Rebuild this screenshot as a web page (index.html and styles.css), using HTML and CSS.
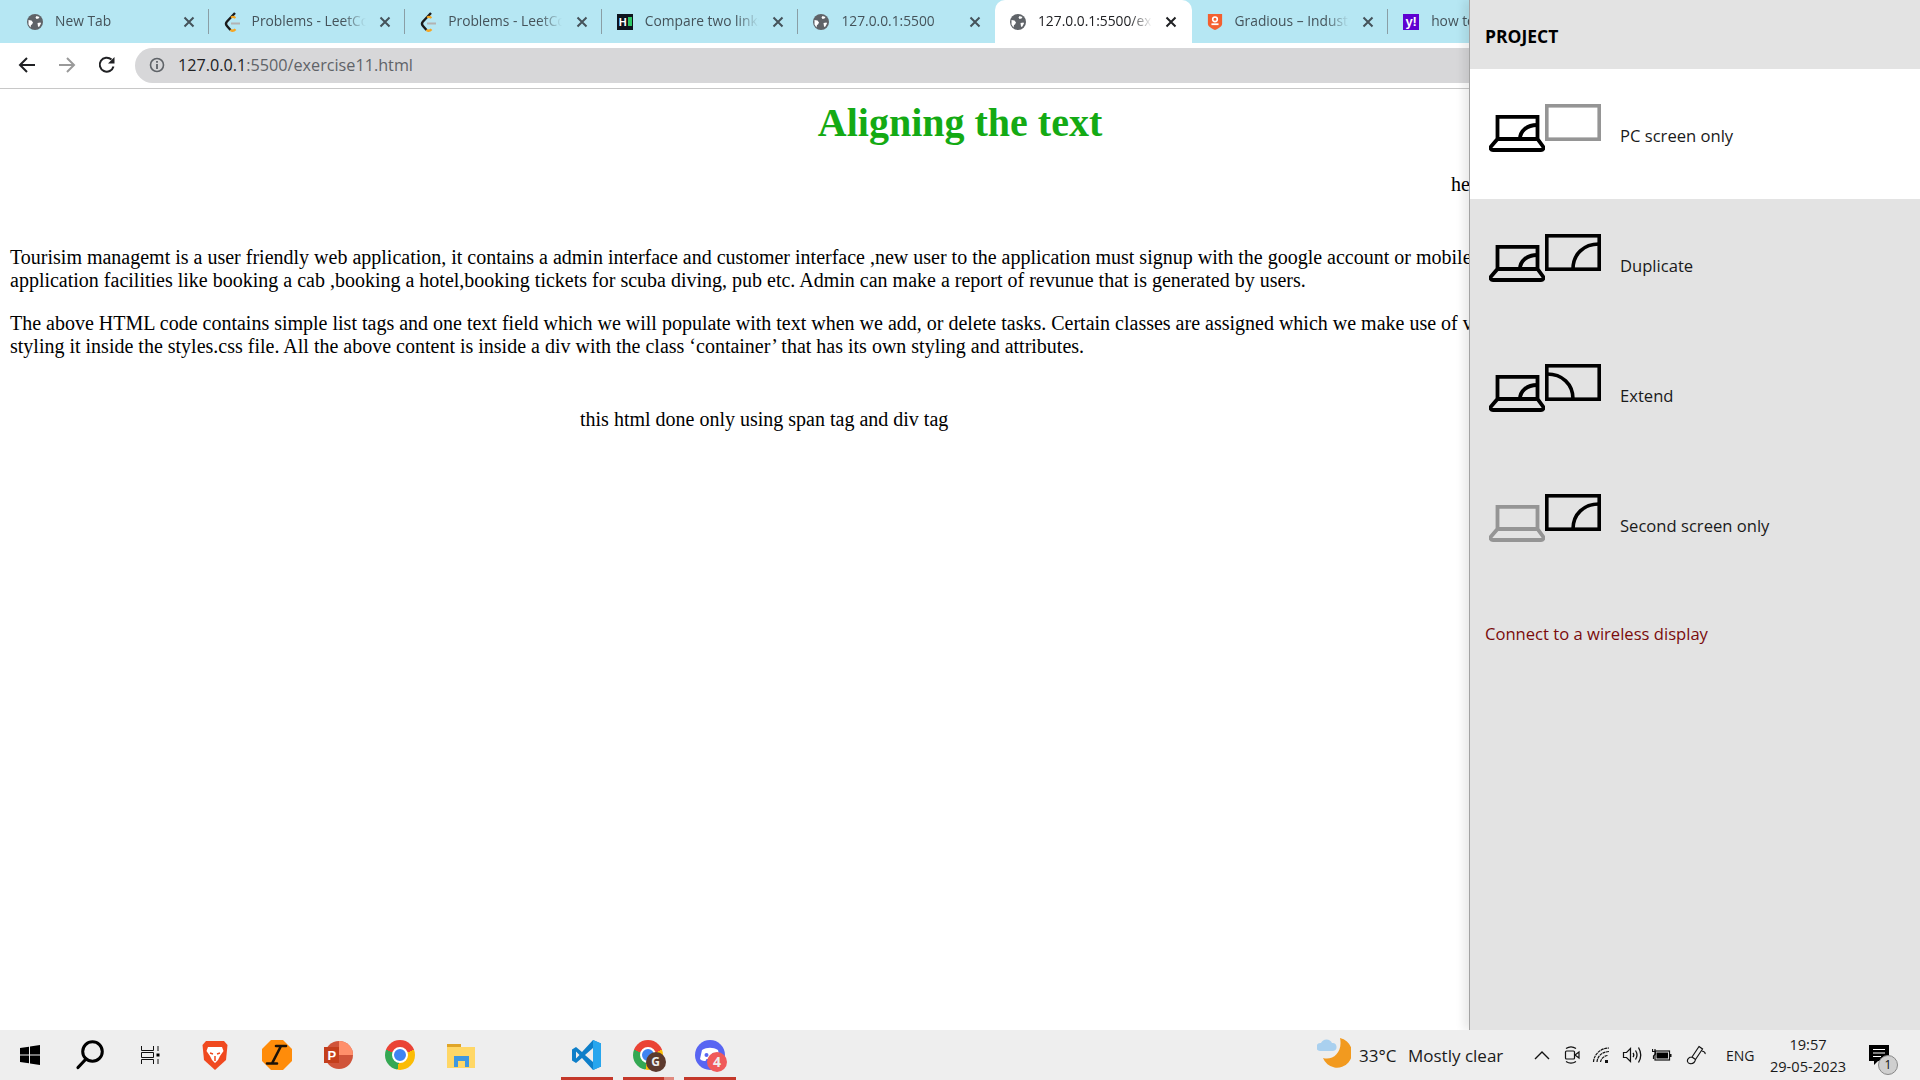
FILE: index.html
```html
<!DOCTYPE html>
<html lang="en">
<head>
    <meta charset="UTF-8">
    <title>127.0.0.1:5500/exercise11.html</title>
    <link rel="stylesheet" href="styles.css">
</head>
<body>
<svg class="defs" width="0" height="0">
    <symbol id="globe" viewBox="0 0 16 16">
        <circle cx="8" cy="8" r="8" fill="#5f6368"/>
        <path d="M1.500 6l3 .5 1.500 2-1 2-1 .5-.5 2.500-2-3zM9.500 2l3 1-1 1.500-2 .5-1-1.500zM10.500 9l3-.5.5 1-2 3.500-1-.5z" fill="#fff"/>
    </symbol>
    <symbol id="close" viewBox="0 0 12 12">
        <path d="M1.500 1.500l9 9M10.500 1.500l-9 9" stroke="currentColor" stroke-width="2" fill="none"/>
    </symbol>
    <symbol id="leetcode" viewBox="0 0 16 20">
        <path d="M11 1L3 9.500c-1.300 1.400-1.300 3 0 4.500l3.500 4" stroke="#1a1a1a" stroke-width="2.400" fill="none"/>
        <path d="M6.500 18c1.500 1 3.500 .8 5-.8" stroke="#f5a623" stroke-width="2.400" fill="none"/>
        <path d="M7 11.500h9" stroke="#b3b3b3" stroke-width="2"/>
        <path d="M7 5.500c1.500-1 3-.8 4.500 .5" stroke="#f5a623" stroke-width="2" fill="none"/>
    </symbol>
    <symbol id="laptop" viewBox="0 0 56 37">
        <path d="M8.500 24V1.800h40V24M8.500 24h40l5.500 7.500c1 2 0 3.500-2 3.500H4c-2 0-3-1.500-2-3.500z" fill="none" stroke="currentColor" stroke-width="3.800"/>
    </symbol>
    <symbol id="laptop-arc" viewBox="0 0 56 37">
        <path d="M31 24c0-8 7-14 17-14" fill="none" stroke="currentColor" stroke-width="3.800"/>
    </symbol>
</svg>

<div class="tabstrip">
    <div class="tab">
        <svg class="favicon"><use href="#globe"/></svg>
        <span class="tab-title">New Tab</span>
        <svg class="tab-close"><use href="#close"/></svg>
    </div>
    <div class="tab">
        <svg class="favicon favicon-tall"><use href="#leetcode"/></svg>
        <span class="tab-title">Problems - LeetCode</span>
        <svg class="tab-close"><use href="#close"/></svg>
    </div>
    <div class="tab">
        <svg class="favicon favicon-tall"><use href="#leetcode"/></svg>
        <span class="tab-title">Problems - LeetCode</span>
        <svg class="tab-close"><use href="#close"/></svg>
    </div>
    <div class="tab">
        <span class="favicon hackerrank">H<i></i></span>
        <span class="tab-title">Compare two links</span>
        <svg class="tab-close"><use href="#close"/></svg>
    </div>
    <div class="tab no-sep">
        <svg class="favicon"><use href="#globe"/></svg>
        <span class="tab-title">127.0.0.1:5500</span>
        <svg class="tab-close"><use href="#close"/></svg>
    </div>
    <div class="tab tab-active no-sep">
        <svg class="favicon"><use href="#globe"/></svg>
        <span class="tab-title">127.0.0.1:5500/exercise11</span>
        <svg class="tab-close"><use href="#close"/></svg>
    </div>
    <div class="tab">
        <svg class="favicon" viewBox="0 0 16 18">
            <path d="M0 0h16v11c0 3-4 5.500-8 7-4-1.500-8-4-8-7z" fill="#f4602f"/>
            <circle cx="8" cy="6" r="2.600" fill="none" stroke="#fff" stroke-width="1.800"/>
            <path d="M4 11.500h8" stroke="#fff" stroke-width="2"/>
        </svg>
        <span class="tab-title">Gradious – Industry</span>
        <svg class="tab-close"><use href="#close"/></svg>
    </div>
    <div class="tab">
        <span class="favicon yahoo">y!</span>
        <span class="tab-title">how to</span>
    </div>
</div>

<div class="toolbar">
    <svg class="nav-icon" viewBox="0 0 20 20"><path d="M18 10H3M10 3l-7 7 7 7" fill="none" stroke="#202124" stroke-width="2"/></svg>
    <svg class="nav-icon" viewBox="0 0 20 20"><path d="M2 10h15M10 3l7 7-7 7" fill="none" stroke="#9a9a9a" stroke-width="2"/></svg>
    <svg class="nav-icon" viewBox="0 0 20 20"><path d="M16.500 11.500A7 7 0 1 1 14.500 4.500" fill="none" stroke="#202124" stroke-width="2"/><path d="M17.500 2v6.500H11z" fill="#202124"/></svg>
    <div class="omnibox">
        <svg class="info-icon" viewBox="0 0 16 16">
            <circle cx="8" cy="8" r="6.500" fill="none" stroke="#5f6368" stroke-width="1.600"/>
            <path d="M8 7v5M8 4v1.800" stroke="#5f6368" stroke-width="1.800"/>
        </svg>
        <span class="url"><b>127.0.0.1</b>:5500/exercise11.html</span>
    </div>
</div>

<main class="page">
    <h1 class="page-title">Aligning the text</h1>
    <div class="right-text">he</div>
    <p class="para">Tourisim managemt is a user friendly web application, it contains a admin interface and customer interface ,new user to the application must signup with the google account or mobile<br>application facilities like booking a cab ,booking a hotel,booking tickets for scuba diving, pub etc. Admin can make a report of revunue that is generated by users.</p>
    <p class="para">The above HTML code contains simple list tags and one text field which we will populate with text when we add, or delete tasks. Certain classes are assigned which we make use of v<br>styling it inside the styles.css file. All the above content is inside a div with the class ‘container’ that has its own styling and attributes.</p>
    <div class="span-text">this html done only using span tag and div tag</div>
</main>

<aside class="project-panel">
    <div class="project-head">PROJECT</div>

    <div class="project-item selected">
        <div class="screens">
            <svg class="laptop"><use href="#laptop"/><use href="#laptop-arc"/></svg>
            <svg class="monitor dim" viewBox="0 0 56 37"><rect x="1.800" y="1.800" width="52.400" height="33.400" fill="none" stroke="currentColor" stroke-width="3.600"/></svg>
        </div>
        <span>PC screen only</span>
    </div>
    <div class="project-item">
        <div class="screens">
            <svg class="laptop"><use href="#laptop"/><use href="#laptop-arc"/></svg>
            <svg class="monitor" viewBox="0 0 56 37"><rect x="1.800" y="1.800" width="52.400" height="33.400" fill="none" stroke="currentColor" stroke-width="3.600"/><path d="M28 35c0-15 11-25 26-25" fill="none" stroke="currentColor" stroke-width="3.600"/></svg>
        </div>
        <span>Duplicate</span>
    </div>
    <div class="project-item">
        <div class="screens">
            <svg class="laptop"><use href="#laptop"/><use href="#laptop-arc"/></svg>
            <svg class="monitor" viewBox="0 0 56 37"><rect x="1.800" y="1.800" width="52.400" height="33.400" fill="none" stroke="currentColor" stroke-width="3.600"/><path d="M2 10c15 0 26 10 26 25" fill="none" stroke="currentColor" stroke-width="3.600"/></svg>
        </div>
        <span>Extend</span>
    </div>
    <div class="project-item">
        <div class="screens">
            <svg class="laptop dim"><use href="#laptop"/></svg>
            <svg class="monitor" viewBox="0 0 56 37"><rect x="1.800" y="1.800" width="52.400" height="33.400" fill="none" stroke="currentColor" stroke-width="3.600"/><path d="M28 35c0-15 11-25 26-25" fill="none" stroke="currentColor" stroke-width="3.600"/></svg>
        </div>
        <span>Second screen only</span>
    </div>

    <div class="wireless-link">Connect to a wireless display</div>
</aside>

<footer class="taskbar">
    <div class="task-slot">
        <svg class="ic-win" viewBox="0 0 20 20"><path d="M0 3l9-1.300V9.500H0zM10 1.500L20 0v9.500H10zM0 10.500h9v7.800L0 17zM10 10.500h10V20l-10-1.500z"/></svg>
    </div>
    <div class="task-slot">
        <svg class="ic-search" viewBox="0 0 30 30"><circle cx="17.500" cy="11.500" r="9.800" fill="none" stroke="#000" stroke-width="3"/><path d="M11 19L3 27.500" stroke="#000" stroke-width="3.200" stroke-linecap="round"/></svg>
    </div>
    <div class="task-slot">
        <svg class="ic-view" viewBox="0 0 20 20"><path d="M1.500 1v4.500h12V1M1.500 19v-4.500h12V19M1.500 7.500h12v5h-12zM18 1v5M18 14v5" fill="none" stroke="#111" stroke-width="1"/><rect x="16.500" y="8.500" width="3" height="3"/></svg>
    </div>
    <div class="task-slot">
        <svg class="ic-app" viewBox="0 0 30 30">
            <path d="M6 1h18l3.500 4-1.500 15L15 30 4 20 2.500 5z" fill="#f0491f"/>
            <path d="M8 7h14l1.500 4-3.500 5-2 4-3 3-3-3-2-4-3.500-5z" fill="#fff"/>
            <path d="M10 13l3 1M20 13l-3 1M15 16v5" stroke="#f0491f" stroke-width="1.500"/>
        </svg>
    </div>
    <div class="task-slot">
        <svg class="ic-app" viewBox="0 0 30 30">
            <path d="M9 0h12l9 9v12l-9 9H9l-9-9V9z" fill="#ff8c0a"/>
            <path d="M14 6h10M5 23.500h10M19 6l-9 17.500" fill="none" stroke="#1c1208" stroke-width="2.600" stroke-linecap="round"/>
        </svg>
    </div>
    <div class="task-slot">
        <svg class="ic-app" viewBox="0 0 30 30">
            <circle cx="16" cy="15" r="14" fill="#d0543a"/>
            <path d="M16 1a14 14 0 0 1 14 14H16z" fill="#ff8f6b"/>
            <rect x="1" y="7" width="15" height="16" fill="#c43e1c"/>
            <text x="4.500" y="19.500" class="ppt-letter">P</text>
        </svg>
    </div>
    <div class="task-slot"><span class="chrome"></span></div>
    <div class="task-slot">
        <svg class="ic-app" viewBox="0 0 30 30">
            <path d="M1 4h14v5H1z" fill="#e0a528"/>
            <path d="M1 7h28v21H1z" fill="#ffd766"/>
            <path d="M8 27V16h15v11h-4v-6h-7v6z" fill="#3f97e0"/>
        </svg>
    </div>
    <div class="task-slot task-gap"></div>
    <div class="task-slot running">
        <svg class="ic-app" viewBox="0 0 30 30">
            <path d="M21 0L10 12 4 7 0 9.500v11L4 23l6-5 11 12 8-3.500V3.500z" fill="#0e7fc9"/>
            <path d="M21 0l8 3.500v23L21 30z" fill="#27a6ee"/>
            <path d="M21 8l-8 7 8 7z" fill="#eeeeee"/>
            <path d="M4 11.500v7l3.500-3.500z" fill="#eeeeee"/>
        </svg>
    </div>
    <div class="task-slot running running-part">
        <span class="chrome"></span>
        <span class="overlay-badge badge-g">G</span>
    </div>
    <div class="task-slot running">
        <svg class="ic-app" viewBox="0 0 30 30">
            <circle cx="15" cy="15" r="15" fill="#5865f2"/>
            <path d="M7 10c5-3 11-3 16 0l2 9c-2 2-4 2-5.500 2l-1-2H11.500l-1 2C9 21 7 21 5 19z" fill="#fff"/>
            <circle cx="11.500" cy="15" r="2" fill="#5865f2"/>
            <circle cx="18.500" cy="15" r="2" fill="#5865f2"/>
        </svg>
        <span class="overlay-badge badge-4">4</span>
    </div>

    <div class="tray">
        <svg class="weather" viewBox="0 0 34 30">
            <path d="M19 0a15 15 0 1 1-17 20c10 3 20-6 17-20z" fill="#f29a1f" transform="translate(4 0)"/>
            <path d="M3 13a4 4 0 0 1 1-8 6 6 0 0 1 11 0 4 4 0 0 1 1 8z" fill="#a9d0ef"/>
        </svg>
        <span class="weather-text weather-temp">33°C</span>
        <span class="weather-text weather-desc">Mostly clear</span>
        <div class="tray-icons">
            <svg class="tray-ic" viewBox="0 0 20 20"><path d="M3 14l7-7 7 7" fill="none" stroke="#111" stroke-width="1.400"/></svg>
            <svg class="tray-ic" viewBox="0 0 20 20"><path d="M4 3.500c3-2 7-2 10 0M4 16.500c3 2 7 2 10 0" fill="none" stroke="#111" stroke-width="1.200"/><rect x="3.500" y="6" width="9" height="8" rx="1" fill="none" stroke="#111" stroke-width="1.200"/><path d="M13 10l4-3v6z" fill="none" stroke="#111" stroke-width="1.200"/></svg>
            <svg class="tray-ic" viewBox="0 0 20 20"><path d="M1.500 17C2 9 9 3 17 3M5 17c.5-6 5-10 12-10.500M8.500 17c.5-3 3-6 7-6.500" fill="none" stroke="#111" stroke-width="1.200" stroke-dasharray="3 .6"/><rect x="13" y="15" width="3" height="3" fill="#111"/></svg>
            <svg class="tray-ic" viewBox="0 0 20 20"><path d="M1.500 7.500h3l4-4v13l-4-4h-3z" fill="none" stroke="#111" stroke-width="1.200"/><path d="M11 8c1 1.300 1 2.700 0 4M13.500 5.500c2 3 2 6 0 9M16.500 2.500c3 5 3 10 0 15" fill="none" stroke="#111" stroke-width="1.300"/></svg>
            <svg class="tray-ic" viewBox="0 0 20 20"><path d="M.5 4v2.500M3 4v2.500M0 6.500h3.500V9l-2 2v3" fill="none" stroke="#111" stroke-width="1.200"/><rect x="3" y="6" width="14.500" height="9" fill="none" stroke="#111" stroke-width="1.200"/><rect x="4.500" y="7.500" width="11.500" height="6" fill="#000"/><rect x="18" y="9" width="1.500" height="3" fill="#111"/></svg>
            <svg class="tray-ic ic-pen" viewBox="0 0 20 20"><path d="M13 1.500l3.500 2.500-7 10.500-3.500-2.500zM6 12c-3 0-5 2-4.500 4.500C2 19 6 19.500 8 17.500c1.500-1.500 1.500-3.500 1.500-3M16 6c2 .5 3.500 1.500 3 3" fill="none" stroke="#111" stroke-width="1.200"/></svg>
        </div>
        <span class="lang">ENG</span>
        <div class="clock">
            <span>19:57</span>
            <span>29-05-2023</span>
        </div>
        <div class="notify">
            <svg class="notify-ic" viewBox="0 0 20 20"><path d="M0 0h20v16H9l-4 4v-4H0z" fill="#000"/><path d="M4 4.500h12M4 8h12M4 11.500h8" stroke="#fff"/></svg>
            <span class="notify-count">1</span>
        </div>
    </div>
</footer>
</body>
</html>
```

FILE: styles.css
```css
* {
    box-sizing: border-box;
}
html, body {
    height: 100%;
}
body {
    margin: 0;
    height: 1080px;
    overflow: hidden;
    display: flex;
    flex-direction: column;
    position: relative;
    background-color: #fff;
    font-family: "Liberation Serif", serif;
}
.defs {
    position: absolute;
}

/* tabs */
.tabstrip {
    height: 43px;
    display: flex;
    padding-left: 12px;
    background-color: #b6e7f3;
    font-family: "Open Sans", sans-serif;
    font-size: 13.8px;
    overflow: hidden;
    flex-shrink: 0;
}
.tab {
    width: 196.6px;
    flex-shrink: 0;
    height: 43px;
    display: flex;
    align-items: center;
    position: relative;
    color: #45535a;
}
.tab::after {
    content: "";
    position: absolute;
    right: 0;
    top: 9px;
    height: 25px;
    width: 1px;
    background-color: #8a9ea5;
}
.tab.no-sep::after {
    display: none;
}
.tab-active {
    background-color: #fff;
    border-radius: 10px 10px 0 0;
    color: #202124;
}
.favicon {
    width: 16px;
    height: 16px;
    margin-left: 15px;
    flex-shrink: 0;
}
.favicon-tall {
    height: 20px;
}
.hackerrank {
    background-color: #0e141e;
    color: #fff;
    font: bold 11px "Liberation Sans", sans-serif;
    display: flex;
    align-items: center;
    padding-left: 2px;
    gap: 1px;
}
.hackerrank i {
    width: 4px;
    height: 9px;
    background-color: #2ec866;
}
.yahoo {
    background-color: #5f01d1;
    color: #fff;
    font: bold 13px "Liberation Sans", sans-serif;
    text-align: center;
    line-height: 15px;
}
.tab-title {
    width: 114px;
    margin-left: 12px;
    padding-bottom: 2px;
    white-space: nowrap;
    overflow: hidden;
    -webkit-mask-image: linear-gradient(to right, #000 80%, transparent);
    mask-image: linear-gradient(to right, #000 80%, transparent);
}
.tab-close {
    width: 12px;
    height: 12px;
    margin-left: 13.5px;
    color: #45535a;
}
.tab-active .tab-close {
    color: #202124;
}

/* address bar */
.toolbar {
    height: 46px;
    display: flex;
    align-items: center;
    padding: 0 0 1px 17px;
    border-bottom: 1px solid #c8c8c8;
    background-color: #fff;
    flex-shrink: 0;
}
.nav-icon {
    width: 20px;
    height: 20px;
    margin-right: 20px;
}
.omnibox {
    flex: 1;
    height: 35px;
    margin-left: -2px;
    border-radius: 18px 0 0 18px;
    background-color: #d7d7d9;
    display: flex;
    align-items: center;
    padding-left: 14px;
}
.info-icon {
    width: 16px;
    height: 16px;
}
.url {
    margin-left: 13px;
    font-family: "Open Sans", sans-serif;
    font-size: 16.2px;
    color: #5f6368;
}
.url b {
    font-weight: normal;
    color: #202124;
}

/* page content */
.page {
    flex: 1;
    padding: 11px 8px 0 10px;
    color: #000;
    font-size: 20px;
    line-height: 23px;
}
.page-title {
    margin: 0 0 27px;
    padding-right: 2px;
    text-align: center;
    font-size: 40px;
    line-height: 46px;
    color: #14aa14;
}
.right-text {
    text-align: right;
    padding-right: 442px;
    margin-bottom: 50px;
}
.para {
    margin: 0 0 20px;
    white-space: nowrap;
}
.span-text {
    margin-top: 50px;
    padding-left: 570px;
}

/* project flyout */
.project-panel {
    position: absolute;
    top: 0;
    right: 0;
    width: 451px;
    height: 1030px;
    background-color: #e3e3e3;
    border-left: 1px solid #a3a3a3;
    box-shadow: -6px 0 8px rgba(0, 0, 0, 0.08);
    font-family: "Open Sans", sans-serif;
    font-size: 16.6px;
    color: #1a1a1a;
}
.project-head {
    height: 69px;
    padding: 24px 0 0 15px;
    font-size: 17.5px;
    line-height: 24px;
    font-weight: 700;
    color: #000;
}
.project-item {
    height: 130px;
    display: flex;
    align-items: center;
    padding-left: 19px;
}
.project-item.selected {
    background-color: #fff;
}
.screens {
    width: 112px;
    height: 48px;
    margin-right: 19px;
    margin-top: -12px;
    display: flex;
    color: #000;
}
.laptop {
    width: 56px;
    height: 37px;
    margin-top: 11px;
}
.monitor {
    width: 56px;
    height: 37px;
}
.dim {
    color: #959595;
}
.project-item span {
    margin-top: 2px;
}
.wireless-link {
    margin: 34px 0 0 15px;
    line-height: 22px;
    color: #7a0b0b;
}

/* windows taskbar */
.taskbar {
    position: relative;
    height: 50px;
    display: flex;
    align-items: center;
    background-color: #eee;
    flex-shrink: 0;
}
.task-slot {
    width: 61.5px;
    height: 50px;
    flex-shrink: 0;
    display: flex;
    align-items: center;
    justify-content: center;
    position: relative;
}
.task-gap {
    width: 64px;
}
.task-slot.running::after {
    content: "";
    position: absolute;
    left: 5px;
    right: 5px;
    bottom: 0;
    height: 3px;
    background-color: #c4382a;
}
.task-slot.running-part::after {
    background: linear-gradient(to right, #c4382a 80%, #e08a7f 80%);
}
.ic-win {
    width: 20px;
    height: 20px;
    margin-right: 1px;
}
.ic-search {
    width: 30px;
    height: 30px;
    margin-right: 4px;
}
.ic-view {
    width: 20px;
    height: 20px;
    margin-right: 7px;
}
.ic-app {
    width: 30px;
    height: 30px;
}
.ppt-letter {
    font: bold 13px "Liberation Sans", sans-serif;
    fill: #fff;
}
.chrome {
    width: 30px;
    height: 30px;
    border-radius: 50%;
    background: conic-gradient(from -70deg, #ea4335 0 140deg, #fbbc05 140deg 260deg, #34a853 260deg 360deg);
    display: flex;
    align-items: center;
    justify-content: center;
}
.chrome::after {
    content: "";
    width: 12px;
    height: 12px;
    border-radius: 50%;
    background-color: #3f83f1;
    border: 2.5px solid #fff;
    box-sizing: content-box;
}
.overlay-badge {
    position: absolute;
    width: 20px;
    height: 20px;
    border-radius: 50%;
    color: #eee;
    font: bold 12px/20px "Open Sans", sans-serif;
    text-align: center;
}
.badge-g {
    left: 28px;
    top: 22px;
    background-color: #5c3a2e;
}
.badge-4 {
    left: 28px;
    top: 22px;
    background-color: #f05a5a;
    font-size: 14px;
}

.tray {
    margin-left: auto;
    width: 603px;
    height: 50px;
    display: flex;
    align-items: center;
    font-family: "Open Sans", sans-serif;
    color: #1a1a1a;
}
.weather {
    width: 34px;
    height: 30px;
    margin-bottom: 4px;
    flex-shrink: 0;
}
.weather-text {
    font-size: 17px;
    white-space: nowrap;
}
.weather-temp {
    width: 38px;
    margin-left: 8px;
}
.weather-desc {
    width: 95px;
    margin-left: 11px;
}
.tray-icons {
    display: flex;
    margin-left: 24px;
}
.tray-ic {
    width: 20px;
    height: 20px;
    margin: 0 5px;
}
.ic-pen {
    margin-left: 9px;
}
.lang {
    width: 30px;
    margin-left: 15px;
    font-size: 14px;
}
.clock {
    width: 84px;
    margin-left: 10px;
    display: flex;
    flex-direction: column;
    align-items: center;
    font-size: 14.6px;
    line-height: 22px;
}
.notify {
    position: relative;
    width: 60px;
    height: 50px;
    margin-left: 3px;
}
.notify-ic {
    position: absolute;
    left: 16px;
    top: 15px;
    width: 20px;
    height: 20px;
}
.notify-count {
    position: absolute;
    left: 25px;
    top: 25px;
    width: 20px;
    height: 20px;
    border-radius: 50%;
    background-color: #cfcfcf;
    border: 1px solid #888;
    font-size: 12px;
    line-height: 18px;
    text-align: center;
    color: #111;
}
```
